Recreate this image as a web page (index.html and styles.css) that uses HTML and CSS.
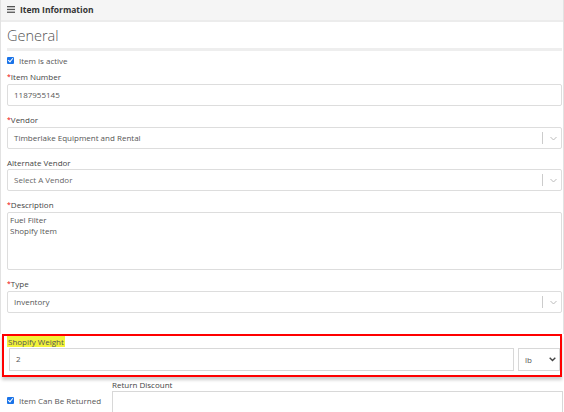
FILE: index.html
```html
<!DOCTYPE html>
<html lang="en">
<head>
    <meta charset="UTF-8" />
    <title>Item Information</title>
    <link rel="stylesheet" href="styles.css">
</head>
<body>

    <div class="panel">
        <div class="panel-heading">
            <svg class="menu-icon" width="8" height="7" viewBox="0 0 8 7">
                <rect x="0" y="0" width="8" height="1.3" fill="#555" />
                <rect x="0" y="2.8" width="8" height="1.3" fill="#555" />
                <rect x="0" y="5.6" width="8" height="1.3" fill="#555" />
            </svg>
            <span>Item Information</span>
        </div>

        <div class="panel-body">
            <h2 class="section-title">General</h2>

            <label class="check-row">
                <span class="check"></span>
                <span>Item is active</span>
            </label>

            <div class="form-group">
                <label class="field-label"><span class="req">*</span>Item Number</label>
                <div class="input">1187955145</div>
            </div>

            <div class="form-group">
                <label class="field-label"><span class="req">*</span>Vendor</label>
                <div class="select">
                    <span>Timberlake Equipment and Rental</span>
                    <span class="select-arrow"><svg width="7" height="5" viewBox="0 0 7 5"><path d="M0.5 1 L3.5 4 L6.5 1" fill="none" stroke="#bbb" stroke-width="1" /></svg></span>
                </div>
            </div>

            <div class="form-group">
                <label class="field-label">Alternate Vendor</label>
                <div class="select placeholder">
                    <span>Select A Vendor</span>
                    <span class="select-arrow"><svg width="7" height="5" viewBox="0 0 7 5"><path d="M0.5 1 L3.5 4 L6.5 1" fill="none" stroke="#bbb" stroke-width="1" /></svg></span>
                </div>
            </div>

            <div class="form-group">
                <label class="field-label"><span class="req">*</span>Description</label>
                <div class="textarea">Fuel Filter<br />Shopify Item</div>
            </div>

            <div class="form-group last">
                <label class="field-label"><span class="req">*</span>Type</label>
                <div class="select">
                    <span>Inventory</span>
                    <span class="select-arrow"><svg width="7" height="5" viewBox="0 0 7 5"><path d="M0.5 1 L3.5 4 L6.5 1" fill="none" stroke="#bbb" stroke-width="1" /></svg></span>
                </div>
            </div>
        </div>
    </div>

    <!-- highlighted weight block -->
    <div class="weight-box">
        <label class="field-label"><span class="marker">Shopify Weight</span></label>
        <div class="weight-row">
            <div class="input weight-input">2</div>
            <div class="unit-select">
                <span>lb</span>
                <svg width="7" height="5" viewBox="0 0 7 5"><path d="M0.7 0.8 L3.5 3.6 L6.3 0.8" fill="none" stroke="#444" stroke-width="1.4" /></svg>
            </div>
        </div>
    </div>

    <div class="returns-row">
        <label class="check-row returns-check">
            <span class="check"></span>
            <span>Item Can Be Returned</span>
        </label>
        <div class="return-discount">
            <label class="field-label">Return Discount</label>
            <div class="input"></div>
        </div>
    </div>

</body>
</html>
```

FILE: styles.css
```css
* {
    margin: 0;
    padding: 0;
    box-sizing: border-box;
}
body {
    font-family: 'Open Sans', 'Noto Sans', sans-serif;
    font-size: 8px;
    color: #444;
    background: #fff;
    width: 564px;
    height: 412px;
    overflow: hidden;
}

/* Panel */
.panel {
    border-left: 1px solid #e2e2e2;
    border-right: 1px solid #e2e2e2;
}
.panel-heading {
    display: flex;
    align-items: center;
    gap: 5px;
    height: 22px;
    padding: 0 6px 2px;
    background: #f5f5f5;
    border-bottom: 2px solid #ececec;
    font-size: 8.5px;
    font-weight: 700;
    color: #333;
}
.panel-body {
    padding: 0 1px 0 6px;
}
.section-title {
    font-size: 14.5px;
    font-weight: 300;
    color: #555;
    line-height: 20px;
    padding-top: 4px;
    padding-bottom: 2px;
    border-bottom: 3px solid #eee;
}

/* Checkbox rows */
.check-row {
    display: flex;
    align-items: center;
    gap: 5px;
    height: 12px;
    margin: 3px 0 5px;
    color: #555;
}
.check {
    width: 7px;
    height: 7px;
    border-radius: 1px;
    background: #1a73e8;
    position: relative;
    flex: none;
}
.check::after {
    content: "";
    position: absolute;
    left: 2px;
    top: 0.5px;
    width: 2px;
    height: 4px;
    border: solid #fff;
    border-width: 0 1.2px 1.2px 0;
    transform: rotate(40deg);
}

/* Fields */
.form-group {
    margin-bottom: 8px;
}
.form-group.last {
    margin-bottom: 0;
    padding-bottom: 21px;
}
.field-label {
    display: block;
    line-height: 12px;
    color: #444;
}
.req {
    color: #e00;
    font-size: 7px;
    position: relative;
    top: -1px;
}
.input,
.select,
.textarea {
    height: 22px;
    border: 1px solid #ddd;
    border-radius: 2px;
    background: #fff;
    color: #555;
    padding: 0 6px;
    line-height: 20px;
}
.select {
    display: flex;
    justify-content: space-between;
    align-items: center;
}
.placeholder {
    color: #666;
}
.select-arrow {
    display: flex;
    align-items: center;
    height: 12px;
    padding-left: 7px;
    margin-right: -2px;
    border-left: 1px solid #ccc;
}
.textarea {
    height: 58px;
    padding: 1px 2px;
    line-height: 11px;
    color: #555;
}

/* Highlighted weight block */
.weight-box {
    margin: 0 2px 0 2px;
    height: 43px;
    border: 2px solid #f00;
    padding: 0 0 0 3px;
    box-shadow: 0 3px 3px rgba(0, 0, 0, 0.2);
}
.weight-box .field-label {
    line-height: 11px;
}
.marker {
    background: #f2f23a;
    padding: 0 1px;
    color: #555;
}
.weight-row {
    display: flex;
    gap: 4px;
    margin-top: 1px;
}
.weight-input {
    flex: 1;
    height: 23px;
    margin-left: 2px;
    border-width: 1px;
    border-color: #d8d8d8;
    border-radius: 0;
}
.unit-select {
    width: 42px;
    height: 23px;
    border: 1px solid #d8d8d8;
    display: flex;
    justify-content: space-between;
    align-items: center;
    padding: 0 3px 0 6px;
    color: #555;
}

/* Returns */
.returns-row {
    display: flex;
    padding: 2px 1px 0 7px;
}
.returns-check {
    width: 105px;
    margin: 15px 0 0;
}
.return-discount {
    flex: 1;
}
.return-discount .input {
    height: 23px;
    border-radius: 0;
    border-color: #d8d8d8;
}
```
